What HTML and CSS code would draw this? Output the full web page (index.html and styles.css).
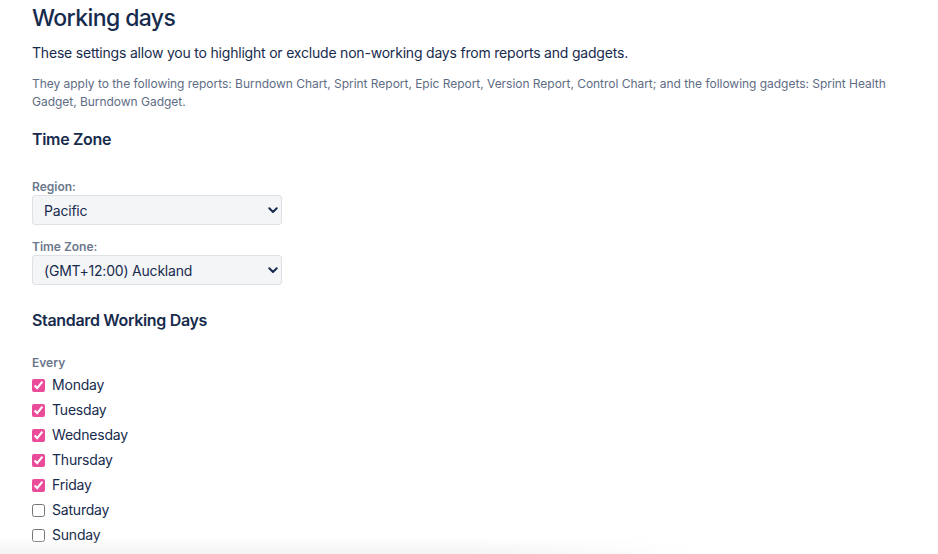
FILE: index.html
```html
<!DOCTYPE html>
<html lang="en">

<head>
    <meta charset="UTF-8">
    <meta name="viewport" content="width=device-width, initial-scale=1.0">
    <title>Working days</title>
    <link rel="stylesheet" href="styles.css">
</head>

<body>
    <div class="page">
        <h1 class="title">Working days</h1>
        <p class="intro">These settings allow you to highlight or exclude non-working days from reports and gadgets.</p>
        <p class="note">They apply to the following reports: Burndown Chart, Sprint Report, Epic Report, Version Report, Control Chart; and the following gadgets: Sprint Health Gadget, Burndown Gadget.</p>

        <h2 class="section">Time Zone</h2>

        <form class="tzform">
            <label class="label" for="region">Region:</label>
            <div class="selectwrap">
                <select id="region" class="select">
                    <option>Pacific</option>
                </select>
                <svg class="chev" width="10" height="7" viewBox="0 0 10 7"><path d="M1.3 1.3 L5 5 L8.7 1.3" fill="none" stroke="#172b4d" stroke-width="2" stroke-linecap="round" stroke-linejoin="round"/></svg>
            </div>

            <label class="label" for="tz">Time Zone:</label>
            <div class="selectwrap">
                <select id="tz" class="select">
                    <option>(GMT+12:00) Auckland</option>
                </select>
                <svg class="chev" width="10" height="7" viewBox="0 0 10 7"><path d="M1.3 1.3 L5 5 L8.7 1.3" fill="none" stroke="#172b4d" stroke-width="2" stroke-linecap="round" stroke-linejoin="round"/></svg>
            </div>
        </form>

        <h2 class="section section2">Standard Working Days</h2>

        <div class="label every">Every</div>
        <ul class="days">
            <li><label><input type="checkbox" checked> Monday</label></li>
            <li><label><input type="checkbox" checked> Tuesday</label></li>
            <li><label><input type="checkbox" checked> Wednesday</label></li>
            <li><label><input type="checkbox" checked> Thursday</label></li>
            <li><label><input type="checkbox" checked> Friday</label></li>
            <li><label><input type="checkbox"> Saturday</label></li>
            <li><label><input type="checkbox"> Sunday</label></li>
        </ul>
    </div>
    <div class="fade"></div>
</body>

</html>
```

FILE: styles.css
```css
* {
    box-sizing: border-box;
}

body {
    margin: 0;
    background-color: white;
    font-family: Inter, "Noto Sans", "Liberation Sans", sans-serif;
    color: #172b4d;
}

.page {
    padding: 4px 32px 0 32px;
}

.title {
    margin: 0;
    font-size: 23px;
    font-weight: 500;
    line-height: 28px;
    letter-spacing: -0.6px;
}

.intro {
    margin: 11px 0 0 0;
    font-size: 14px;
    line-height: 20px;
    letter-spacing: -0.2px;
}

.note {
    margin: 12px 0 0 0;
    font-size: 12px;
    line-height: 18px;
    color: #5e6c84;
    letter-spacing: -0.03px;
}

.section {
    margin: 17px 0 0 0;
    font-size: 16px;
    font-weight: 600;
    line-height: 22px;
    letter-spacing: -0.33px;
}

.section2 {
    margin-top: 24px;
}

.tzform {
    margin-top: 29px;
}

.label {
    display: block;
    font-size: 12px;
    font-weight: 600;
    color: #6b778c;
    line-height: 16px;
}

.selectwrap {
    position: relative;
    width: 250px;
    margin: 0 0 14px 0;
}

.select {
    display: block;
    appearance: none;
    -webkit-appearance: none;
    width: 250px;
    height: 30px;
    padding: 0 11px;
    background-color: #f4f5f7;
    border: 1px solid #dfe1e6;
    border-radius: 3px;
    font-family: inherit;
    font-size: 14px;
    letter-spacing: -0.2px;
    color: #172b4d;
}

.chev {
    position: absolute;
    right: 4px;
    top: 12px;
    pointer-events: none;
}

.every {
    margin-top: 24px;
}

.days {
    list-style: none;
    margin: 4px 0 0 0;
    padding: 0;
}

.days li {
    height: 25px;
    font-size: 14px;
    line-height: 20px;
    letter-spacing: -0.2px;
}

.days label {
    display: flex;
    align-items: center;
    gap: 7px;
}

.days input {
    margin: 0;
    width: 13px;
    height: 13px;
    accent-color: #ea4c9a;
}

.fade {
    position: fixed;
    left: 0;
    right: 0;
    bottom: 0;
    height: 16px;
    background: linear-gradient(to bottom, rgba(240, 240, 240, 0), rgba(238, 238, 238, 0.7));
    -webkit-mask-image: linear-gradient(to right, black 50%, transparent 75%);
    mask-image: linear-gradient(to right, black 50%, transparent 75%);
    pointer-events: none;
}
```
